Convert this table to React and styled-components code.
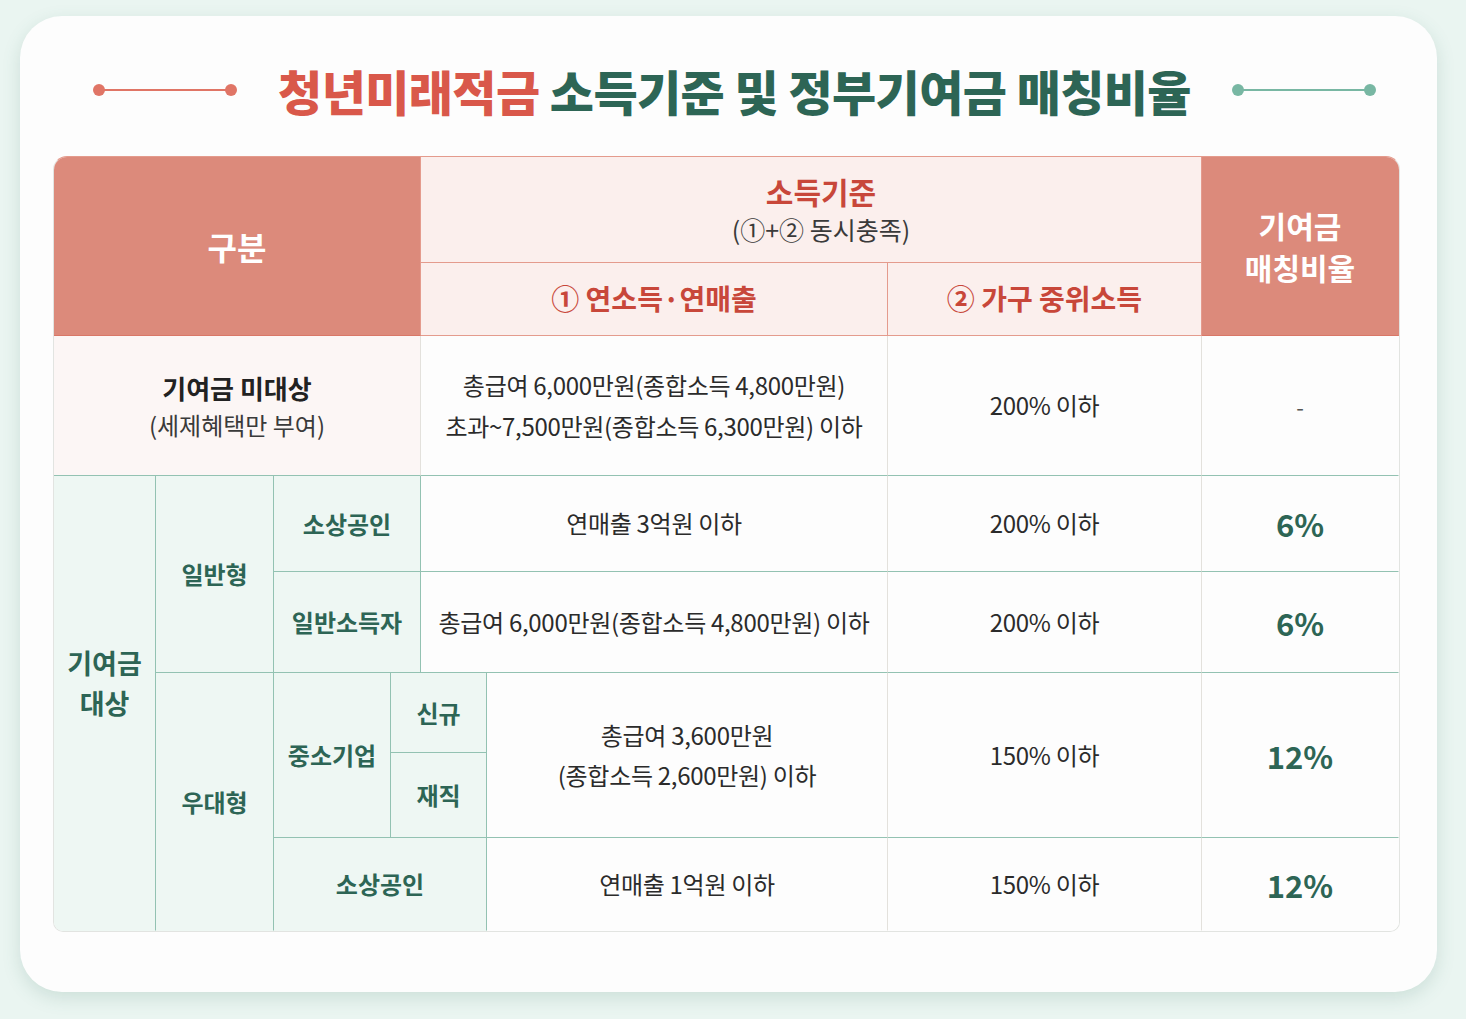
import styled, { createGlobalStyle } from "styled-components";

const coral = "#dc8a7b";
const coralLine = "#e49b8d";
const headLight = "#fbefed";
const red = "#c8473a";
const green = "#2d6555";
const greenBg = "#eef7f3";
const greenLine = "#93c2b2";
const grayLine = "#e3e1dc";
const font = `"Noto Sans CJK KR", "Noto Sans", sans-serif`;

const GlobalStyle = createGlobalStyle`
  body {
    margin: 0;
    background: #eaf5f1;
    font-family: ${font};
  }
`;

const Page = styled.div`
  width: 1466px;
  height: 1019px;
  padding: 16px 0 0 20px;
  box-sizing: border-box;
`;

const Card = styled.div`
  width: 1417px;
  height: 976px;
  box-sizing: border-box;
  background: #fdfdfd;
  border-radius: 42px;
  box-shadow: 0 6px 18px rgba(70, 130, 110, 0.18);
  padding: 44px 39px 0 33px;
`;

const TitleRow = styled.div`
  height: 60px;
  display: flex;
  align-items: center;
  justify-content: center;
  gap: 40px;
  margin-bottom: 36px;
  padding-left: 18px;
`;

const Title = styled.h1`
  margin: 0;
  font-size: 48px;
  font-weight: 900;
  letter-spacing: -0.6px;
  color: ${green};
  white-space: nowrap;
`;

const Accent = styled.span`
  color: #d9584a;
`;

const Deco = ({ color }) => (
  <svg width="146" height="14" viewBox="0 0 146 14">
    <line x1="7" y1="7" x2="139" y2="7" stroke={color} strokeWidth="2" />
    <circle cx="7" cy="7" r="6" fill={color} />
    <circle cx="139" cy="7" r="6" fill={color} />
  </svg>
);

const Table = styled.div`
  display: grid;
  grid-template-columns: 102px 118px 117px 30px 66px 401px 314px 197px;
  grid-template-rows: 106px 73px 140px 96px 101px 80px 85px 93px;
  border: 1px solid #e2e4e1;
  border-top-color: ${coralLine};
  border-radius: 14px 14px 10px 10px;
  overflow: hidden;
  width: fit-content;
`;

const bgs = {
  head: coral,
  light: headLight,
  pink: "#fcf6f5",
  label: greenBg,
  data: "#fdfdfd",
};

const Cell = styled.div`
  grid-column: ${(p) => p.$col};
  grid-row: ${(p) => p.$row};
  display: flex;
  flex-direction: column;
  align-items: center;
  justify-content: center;
  text-align: center;
  box-sizing: border-box;
  background: ${(p) => bgs[p.$kind]};
  border-right: 1px solid ${(p) => p.$right || "transparent"};
  border-bottom: 1px solid ${(p) => p.$bottom || "transparent"};
  padding-bottom: ${(p) => p.$lift || 0}px;
  padding-left: ${(p) => p.$shift || 0}px;
`;

const HeadText = styled.div`
  color: #fff;
  font-size: ${(p) => p.$size || 29}px;
  font-weight: 700;
  line-height: ${(p) => p.$lh || 1.45};
`;

const RedText = styled.div`
  color: ${red};
  font-size: ${(p) => p.$size || 28}px;
  font-weight: 700;
  line-height: 1.35;
`;

const Note = styled.div`
  color: #3a3a3a;
  font-size: ${(p) => p.$size || 24}px;
  font-weight: 400;
  line-height: 1.5;
`;

const Label = styled.div`
  color: ${(p) => p.$color || green};
  font-size: ${(p) => p.$size || 24}px;
  font-weight: 700;
  line-height: 1.5;
`;

const Data = styled.div`
  color: #2b2b2b;
  font-size: 24px;
  font-weight: 400;
  line-height: 1.67;
  letter-spacing: -0.3px;
`;

const Percent = styled.div`
  color: ${green};
  font-size: 31px;
  font-weight: 700;
`;

const Dash = styled.div`
  color: #555;
  font-size: 22px;
`;

const dataCell = { $kind: "data", $right: grayLine, $bottom: greenLine };
const lastCell = { $kind: "data", $bottom: greenLine };
const labelCell = { $kind: "label", $right: greenLine, $bottom: greenLine };

export default function App() {
  return (
    <>
      <GlobalStyle />
      <Page>
        <Card>
          <TitleRow>
            <Deco color="#e07566" />
            <Title>
              <Accent>청년미래적금</Accent> 소득기준 및 정부기여금 매칭비율
            </Title>
            <Deco color="#78b7a3" />
          </TitleRow>

          <Table>
            <Cell $col="1 / 5" $row="1 / 3" $kind="head" $right={coralLine} $bottom="#d97767">
              <HeadText $size={32}>구분</HeadText>
            </Cell>
            <Cell $col="5 / 8" $row="1 / 2" $kind="light" $right={coralLine} $bottom={coralLine} $shift={20}>
              <RedText $size={30}>소득기준</RedText>
              <Note $size={25}>(①+② 동시충족)</Note>
            </Cell>
            <Cell $col="8 / 9" $row="1 / 3" $kind="head" $bottom="#d97767">
              <HeadText $size={30} $lh={1.4}>
                기여금
                <br />
                매칭비율
              </HeadText>
            </Cell>
            <Cell $col="5 / 7" $row="2 / 3" $kind="light" $right={coralLine} $bottom={coralLine}>
              <RedText>① 연소득·연매출</RedText>
            </Cell>
            <Cell $col="7 / 8" $row="2 / 3" $kind="light" $right={coralLine} $bottom={coralLine}>
              <RedText>② 가구 중위소득</RedText>
            </Cell>

            <Cell $col="1 / 5" $row="3 / 4" $kind="pink" $right={grayLine} $bottom={greenLine}>
              <Label $color="#222" $size={26}>기여금 미대상</Label>
              <Note>(세제혜택만 부여)</Note>
            </Cell>
            <Cell $col="5 / 7" $row="3 / 4" {...dataCell}>
              <Data>
                총급여 6,000만원(종합소득 4,800만원)
                <br />
                초과~7,500만원(종합소득 6,300만원) 이하
              </Data>
            </Cell>
            <Cell $col="7 / 8" $row="3 / 4" {...dataCell}>
              <Data>200% 이하</Data>
            </Cell>
            <Cell $col="8 / 9" $row="3 / 4" {...lastCell}>
              <Dash>-</Dash>
            </Cell>

            <Cell $col="1 / 2" $row="4 / 9" $kind="label" $right={greenLine} $lift={40}>
              <Label $size={27}>
                기여금
                <br />
                대상
              </Label>
            </Cell>
            <Cell $col="2 / 3" $row="4 / 6" {...labelCell}>
              <Label>일반형</Label>
            </Cell>
            <Cell $col="3 / 5" $row="4 / 5" {...labelCell}>
              <Label>소상공인</Label>
            </Cell>
            <Cell $col="5 / 7" $row="4 / 5" {...dataCell}>
              <Data>연매출 3억원 이하</Data>
            </Cell>
            <Cell $col="7 / 8" $row="4 / 5" {...dataCell}>
              <Data>200% 이하</Data>
            </Cell>
            <Cell $col="8 / 9" $row="4 / 5" {...lastCell}>
              <Percent>6%</Percent>
            </Cell>

            <Cell $col="3 / 5" $row="5 / 6" {...labelCell}>
              <Label>일반소득자</Label>
            </Cell>
            <Cell $col="5 / 7" $row="5 / 6" {...dataCell}>
              <Data>총급여 6,000만원(종합소득 4,800만원) 이하</Data>
            </Cell>
            <Cell $col="7 / 8" $row="5 / 6" {...dataCell}>
              <Data>200% 이하</Data>
            </Cell>
            <Cell $col="8 / 9" $row="5 / 6" {...lastCell}>
              <Percent>6%</Percent>
            </Cell>

            <Cell $col="2 / 3" $row="6 / 9" $kind="label" $right={greenLine}>
              <Label>우대형</Label>
            </Cell>
            <Cell $col="3 / 4" $row="6 / 8" {...labelCell}>
              <Label>중소기업</Label>
            </Cell>
            <Cell $col="4 / 6" $row="6 / 7" {...labelCell}>
              <Label>신규</Label>
            </Cell>
            <Cell $col="4 / 6" $row="7 / 8" {...labelCell}>
              <Label>재직</Label>
            </Cell>
            <Cell $col="6 / 7" $row="6 / 8" {...dataCell}>
              <Data>
                총급여 3,600만원
                <br />
                (종합소득 2,600만원) 이하
              </Data>
            </Cell>
            <Cell $col="7 / 8" $row="6 / 8" {...dataCell}>
              <Data>150% 이하</Data>
            </Cell>
            <Cell $col="8 / 9" $row="6 / 8" {...lastCell}>
              <Percent>12%</Percent>
            </Cell>

            <Cell $col="3 / 6" $row="8 / 9" $kind="label" $right={greenLine}>
              <Label>소상공인</Label>
            </Cell>
            <Cell $col="6 / 7" $row="8 / 9" $kind="data" $right={grayLine}>
              <Data>연매출 1억원 이하</Data>
            </Cell>
            <Cell $col="7 / 8" $row="8 / 9" $kind="data" $right={grayLine}>
              <Data>150% 이하</Data>
            </Cell>
            <Cell $col="8 / 9" $row="8 / 9" $kind="data">
              <Percent>12%</Percent>
            </Cell>
          </Table>
        </Card>
      </Page>
    </>
  );
}
